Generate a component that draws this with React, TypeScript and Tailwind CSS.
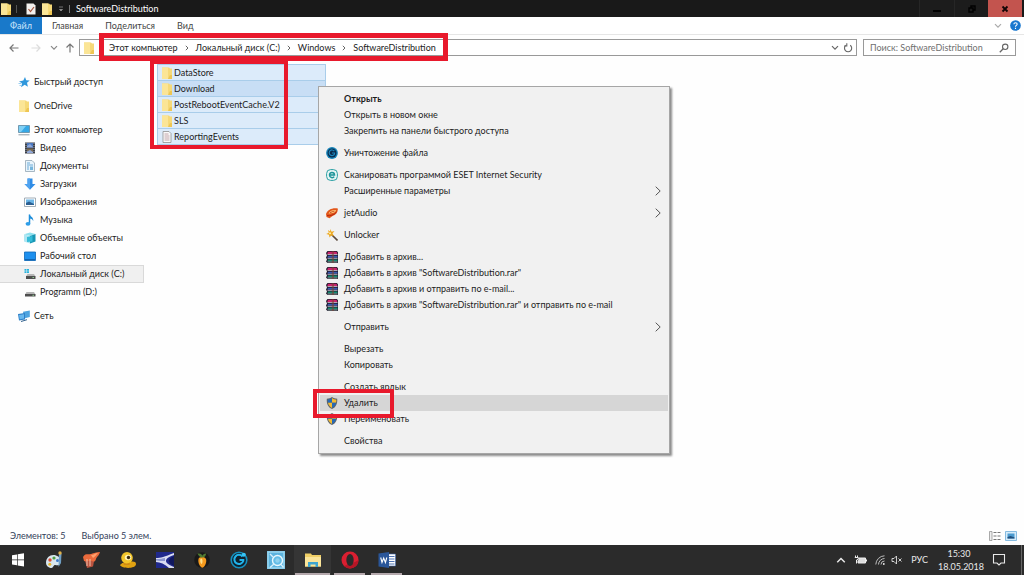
import React from "react";

type IconProps = { className?: string };

const FolderIcon = ({ className = "h-3 w-3" }: IconProps) => (
  <svg viewBox="0 0 12 12" className={className} aria-hidden="true">
    <path d="M1 .5h7l1 1h2V12H1z" fill="#f6d978" />
    <path d="M1 .5h6V12H1z" fill="#fbe596" />
    <path d="M9 8h2v4H7z" fill="#eec653" />
  </svg>
);

const FileIcon = () => (
  <svg viewBox="0 0 12 12" className="h-3 w-3" aria-hidden="true">
    <path d="M2 .5h6l2 2v9H2z" fill="#fafafa" stroke="#8f8f8f" strokeWidth=".8" />
    <path d="M3.500 3h4M3.500 5h5M3.500 7h5M3.500 9h5" stroke="#b48f96" strokeWidth=".8" />
  </svg>
);

const StarIcon = () => (
  <svg viewBox="0 0 12 12" className="h-3 w-3" aria-hidden="true">
    <path d="M7 1l1.200 3.200 3.500.2-2.700 2.300.9 4.100-3.200-2-3.700 2.400 1.200-3.900L1 5.500l4.300-1z" fill="#2f97dc" />
    <path d="M.5 7.500h3M1.500 9.500h2" stroke="#7cc0ee" strokeWidth=".8" />
  </svg>
);

const ComputerIcon = () => (
  <svg viewBox="0 0 12 12" className="h-3 w-3" aria-hidden="true">
    <path d="M.5 1.500h11v7H.5z" fill="#35a8e6" stroke="#5c7f96" strokeWidth=".7" />
    <path d="M1 2h7L3 8H1z" fill="#7fd0f5" />
    <path d="M.5 10.800h11" stroke="#8a9aa5" strokeWidth="1" />
  </svg>
);

const VideoIcon = () => (
  <svg viewBox="0 0 12 12" className="h-3 w-3" aria-hidden="true">
    <path d="M1 .5h10v11H1z" fill="#3a3f4a" />
    <path d="M3 1h6v4.500H3z" fill="#4a78c0" />
    <path d="M3 6.500h6V11H3z" fill="#7a6a50" />
    <path d="M3 4l3-2 3 3v.5H3zM3 9.500l3-1.500 3 2v1H3z" fill="#90a8d8" />
    <path d="M2 1v10M10 1v10" stroke="#d0d0d0" strokeWidth=".7" strokeDasharray="1 1" />
  </svg>
);

const DocumentIcon = () => (
  <svg viewBox="0 0 12 12" className="h-3 w-3" aria-hidden="true">
    <path d="M1.500.5h6.500l2.500 2.500v8.500h-9z" fill="#e9f4fb" stroke="#93a6b4" strokeWidth=".8" />
    <path d="M3 3h3M3 5h6M3 7h2M3 9h2" stroke="#4b9bd0" strokeWidth=".8" />
    <path d="M6 6.500h3V10H6z" fill="#77b6dd" />
  </svg>
);

const DownloadIcon = () => (
  <svg viewBox="0 0 12 12" className="h-3 w-3" aria-hidden="true">
    <path d="M3.500 .5h5V6h3L6 11.800.5 6h3z" fill="#2f8ce6" />
    <path d="M3.500 .5H6v11L.5 6h3z" fill="#4fa3f0" />
  </svg>
);

const PictureIcon = () => (
  <svg viewBox="0 0 12 12" className="h-3 w-3" aria-hidden="true">
    <path d="M.5 2h11v8.500H.5z" fill="#fff" stroke="#8c9aa6" strokeWidth=".8" />
    <path d="M2 3.500h8v5.500H2z" fill="#6bb5e6" />
    <path d="M2 7l3-1.500L10 8v1H2z" fill="#2c5f92" />
  </svg>
);

const MusicIcon = () => (
  <svg viewBox="0 0 12 12" className="h-3 w-3" aria-hidden="true">
    <path d="M5.500.5v9" stroke="#1f8fdb" strokeWidth="1.500" />
    <path d="M5.500.3c.5 2.200 4.500 3 3.700 7C8.700 5.500 7.500 4.500 5.500 4.500z" fill="#1f8fdb" />
    <ellipse cx="4" cy="9.800" rx="2.400" ry="1.900" fill="#2f9ee8" />
  </svg>
);

const CubeIcon = () => (
  <svg viewBox="0 0 12 12" className="h-3 w-3" aria-hidden="true">
    <path d="M0 2.200L6 .5l5.500 1.500L6 4z" fill="#8fe0ee" />
    <path d="M0 2.200L6 4v7.500L0 9.500z" fill="#aee6f2" />
    <path d="M6 4l5.500-2v7.500L6 11.500z" fill="#1796b4" />
    <path d="M3 5l5.500-1v5.500L3 10z" fill="#35bcd8" />
  </svg>
);

const DesktopIcon = () => (
  <svg viewBox="0 0 12 12" className="h-3 w-3" aria-hidden="true">
    <path d="M.5 2h11v8.500H.5z" fill="#1e90ee" stroke="#0d67b8" strokeWidth=".8" />
    <path d="M1 9.700h10" stroke="#0b4f92" strokeWidth=".8" />
  </svg>
);

const DriveIcon = () => (
  <svg viewBox="0 0 12 12" className="h-3 w-3" aria-hidden="true">
    <path d="M2.500 6h7.500l1.500 2.500H1z" fill="#b5b5b5" />
    <path d="M1 8h10.500v2.500H1z" fill="#4f4f4f" />
    <path d="M8.500 9.300h1.500" stroke="#9be89b" strokeWidth=".8" />
  </svg>
);

const SystemDriveIcon = () => (
  <svg viewBox="0 0 12 12" className="h-3 w-3" aria-hidden="true">
    <path d="M.5 1h2v1.800h-2zM3 1h2v1.800H3zM.5 3.300h2v1.800h-2zM3 3.300h2v1.800H3z" fill="#29b3dc" />
    <path d="M3.500 6h6.500l1.500 2.500H2z" fill="#b5b5b5" />
    <path d="M2 8h9.500v3H2z" fill="#4f4f4f" />
    <path d="M8.500 9.500h1.500" stroke="#9be89b" strokeWidth=".8" />
  </svg>
);

const NetworkIcon = () => (
  <svg viewBox="0 0 12 12" className="h-3 w-3" aria-hidden="true">
    <path d="M5 1.800L11.800.5v6.500L6 8.500z" fill="#4da3df" />
    <path d="M0 4l7-1v6.500L1 10.500z" fill="#2f80c8" />
    <path d="M1 5l5-.8v4.200L1.700 9.200z" fill="#67b7ee" />
    <path d="M3 11.500l6-1.800" stroke="#30608c" />
  </svg>
);

const ShredIcon = () => (
  <svg viewBox="0 0 12 12" className="h-3 w-3" aria-hidden="true">
    <circle cx="6" cy="6" r="5.900" fill="#1683b8" />
    <circle cx="6" cy="6" r="4.500" fill="#08294a" />
    <path d="M8.300 4.200A2.800 2.800 0 1 0 8.500 7V6H6" fill="none" stroke="#1b86bd" strokeWidth="1.200" />
  </svg>
);

const EsetIcon = () => (
  <svg viewBox="0 0 12 12" className="h-3 w-3" aria-hidden="true">
    <rect x=".6" y=".6" width="10.800" height="10.800" rx="4" fill="#e6f5f5" stroke="#2a9fa3" strokeWidth="1" />
    <path d="M3.500 6h5C8.400 2.800 3.500 2.700 3.500 6c0 3.100 3.600 3.200 4.700 1.600" fill="none" stroke="#1d9499" strokeWidth="1.500" />
  </svg>
);

const JetAudioIcon = () => (
  <svg viewBox="0 0 12 12" className="h-3 w-3" aria-hidden="true">
    <path d="M0 7C1.500 2.500 7 .3 11.800 1.500 12.200 5 10 8 6.500 9L3.500 11.300.5 10z" fill="#e2571b" />
    <path d="M2.500 6.500C4 3.800 7 2.800 10 3.200 9.500 5.800 6 6.300 2.500 6.500z" fill="#ffc878" />
    <path d="M4 5.800c1.500-1 3-1.500 4.500-1.700" stroke="#c43a12" strokeWidth=".8" fill="none" />
    <path d="M1 8.500c3 .8 7-.5 9.500-3.500" fill="none" stroke="#b5280f" strokeWidth="1" />
  </svg>
);

const WandIcon = () => (
  <svg viewBox="0 0 12 12" className="h-3 w-3" aria-hidden="true">
    <path d="M5 5l6.500 6.500" stroke="#5b4a3c" strokeWidth="1.600" />
    <path d="M4.500 0l1 2.700 3-.7-2 2.500 1.500 2.500-2.800-.6L3.500 8.500 3 5.800.2 5 2.800 3.700 2 1l2 1.500z" fill="#eda822" />
    <circle cx="4" cy="4.300" r="1" fill="#fff1a8" />
  </svg>
);

const RarIcon = () => (
  <svg viewBox="0 0 12 12" className="h-3 w-3" aria-hidden="true">
    <path d="M1.500 0h9.500l1 1.500V12H1.500L0 10.500 1 8.500 0 6.500l1-2L0 2z" fill="#201a2c" />
    <path d="M2 .8h8.500L11.500 3H1.200z" fill="#c9246c" />
    <path d="M1.500 3.500h10" stroke="#f3e7ef" strokeWidth=".7" />
    <path d="M2 4.800h9.500v1.700H1.500z" fill="#3559b4" />
    <path d="M1.500 7.300h10" stroke="#eef" strokeWidth=".7" />
    <path d="M2 8.600h9.500v1.700H1.500z" fill="#138a70" />
    <path d="M1.500 11h10" stroke="#dfe" strokeWidth=".6" />
    <path d="M5.800 0h2.200v12H5.800z" fill="#7b3f33" fillOpacity=".55" />
  </svg>
);

const ShieldIcon = () => (
  <svg viewBox="0 0 12 12" className="h-3 w-3" aria-hidden="true">
    <path d="M6 0C4.500 1.200 2.700 1.700.8 1.700c-.4 5 1.200 8.500 5.200 10.300 4-1.800 5.600-5.300 5.200-10.300C9.300 1.700 7.500 1.200 6 0z" fill="#5f6468" />
    <path d="M6 1C4.700 2 3.200 2.500 1.700 2.600c0 1.200 0 2.200.3 3.200h4z" fill="#2469b8" />
    <path d="M6 1c1.300 1 2.800 1.500 4.300 1.600 0 1.200 0 2.200-.3 3.200H6z" fill="#f2bb33" />
    <path d="M2 5.800h4V11C3.800 9.900 2.500 8.200 2 5.800z" fill="#f2bb33" />
    <path d="M10 5.800H6V11c2.200-1.100 3.500-2.800 4-5.200z" fill="#2469b8" />
  </svg>
);

const ChevronRight = () => (
  <svg viewBox="0 0 6 10" className="h-2.5 w-1.5" aria-hidden="true">
    <path d="M.7.7L5.200 5 .7 9.300" fill="none" stroke="#555" strokeWidth="1" />
  </svg>
);

const ChevronDown = ({ className = "h-1.5 w-2" }: IconProps) => (
  <svg viewBox="0 0 8 6" className={className} aria-hidden="true">
    <path d="M1 1.200l3 3 3-3" fill="none" stroke="currentColor" strokeWidth="1.200" />
  </svg>
);

const ArrowIcon = ({ className }: IconProps) => (
  <svg viewBox="0 0 12 12" className={className} aria-hidden="true">
    <path d="M10.500 6H2M5.500 2.500L2 6l3.500 3.500" fill="none" stroke="currentColor" strokeWidth="1.200" />
  </svg>
);

type MenuEntry = {
  label: string;
  icon?: React.ReactNode;
  bold?: boolean;
  submenu?: boolean;
  active?: boolean;
};

const menuGroups: MenuEntry[][] = [
  [
    { label: "Открыть", bold: true },
    { label: "Открыть в новом окне" },
    { label: "Закрепить на панели быстрого доступа" },
  ],
  [{ label: "Уничтожение файла", icon: <ShredIcon /> }],
  [
    { label: "Сканировать программой ESET Internet Security", icon: <EsetIcon /> },
    { label: "Расширенные параметры", submenu: true },
  ],
  [{ label: "jetAudio", icon: <JetAudioIcon />, submenu: true }],
  [{ label: "Unlocker", icon: <WandIcon /> }],
  [
    { label: "Добавить в архив...", icon: <RarIcon /> },
    { label: 'Добавить в архив "SoftwareDistribution.rar"', icon: <RarIcon /> },
    { label: "Добавить в архив и отправить по e-mail...", icon: <RarIcon /> },
    { label: 'Добавить в архив "SoftwareDistribution.rar" и отправить по e-mail', icon: <RarIcon /> },
  ],
  [{ label: "Отправить", submenu: true }],
  [{ label: "Вырезать" }, { label: "Копировать" }],
  [
    { label: "Создать ярлык" },
    { label: "Удалить", icon: <ShieldIcon />, active: true },
    { label: "Переименовать", icon: <ShieldIcon /> },
  ],
  [{ label: "Свойства" }],
];

type NavEntry = { label: string; icon: React.ReactNode; child?: boolean; active?: boolean };

const navGroups: NavEntry[][] = [
  [{ label: "Быстрый доступ", icon: <StarIcon /> }],
  [{ label: "OneDrive", icon: <FolderIcon /> }],
  [
    { label: "Этот компьютер", icon: <ComputerIcon /> },
    { label: "Видео", icon: <VideoIcon />, child: true },
    { label: "Документы", icon: <DocumentIcon />, child: true },
    { label: "Загрузки", icon: <DownloadIcon />, child: true },
    { label: "Изображения", icon: <PictureIcon />, child: true },
    { label: "Музыка", icon: <MusicIcon />, child: true },
    { label: "Объемные объекты", icon: <CubeIcon />, child: true },
    { label: "Рабочий стол", icon: <DesktopIcon />, child: true },
    { label: "Локальный диск (C:)", icon: <SystemDriveIcon />, child: true, active: true },
    { label: "Programm (D:)", icon: <DriveIcon />, child: true },
  ],
  [{ label: "Сеть", icon: <NetworkIcon /> }],
];

const files = [
  { name: "DataStore" },
  { name: "Download", focused: true },
  { name: "PostRebootEventCache.V2" },
  { name: "SLS" },
  { name: "ReportingEvents", text: true },
];

const crumbs = ["Этот компьютер", "Локальный диск (C:)", "Windows", "SoftwareDistribution"];

function TitleBar() {
  return (
    <header className="flex h-[17px] items-stretch bg-[#191919] text-white">
      <div className="flex items-center">
        <FolderIcon className="h-3 w-3" />
        <span className="ml-1 h-2 w-px bg-[#555]" />
        <button type="button" aria-label="Свойства папки" className="ml-2">
          <svg viewBox="0 0 12 12" className="h-3 w-3" aria-hidden="true">
            <path d="M1.500.5h7l2 2v9h-9z" fill="#f4f1ee" />
            <path d="M3.500 6l2 2.500L9 4" fill="none" stroke="#a5543e" strokeWidth="1.200" />
          </svg>
        </button>
        <button type="button" aria-label="Новая папка" className="ml-1">
          <FolderIcon className="h-3 w-3" />
        </button>
        <button type="button" aria-label="Настройка панели" className="ml-1">
          <svg viewBox="0 0 8 8" className="h-2 w-2" aria-hidden="true">
            <path d="M2 2h4M2.500 4.500h3L4 6z" fill="#999" stroke="#999" strokeWidth=".7" />
          </svg>
        </button>
        <span className="ml-1 h-2 w-px bg-[#777]" />
        <h1 className="ml-1.5 text-[9px]">SoftwareDistribution</h1>
      </div>
      <div className="ml-auto flex pr-0.5">
        <button type="button" aria-label="Свернуть" className="flex w-[35px] items-center justify-center border-l border-[#262626] bg-[#1c1c1c]">
          <span className="mt-1 h-0.5 w-2 bg-black" />
        </button>
        <button type="button" aria-label="Развернуть" className="flex w-[34px] items-center justify-center border-l border-[#262626] bg-[#1c1c1c]">
          <svg viewBox="0 0 8 8" className="h-2 w-2" aria-hidden="true">
            <path d="M1 3h4v4H1zM3 2.500V1h4v4H5.500" fill="none" stroke="#000" strokeWidth="1.400" />
          </svg>
        </button>
        <button type="button" aria-label="Закрыть" className="flex w-[34px] items-center justify-center bg-[#c3544e]">
          <svg viewBox="0 0 8 8" className="h-2 w-2" aria-hidden="true">
            <path d="M1.500 1.500l5 5M6.500 1.500l-5 5" stroke="#120505" strokeWidth="1.800" />
          </svg>
        </button>
      </div>
    </header>
  );
}

function RibbonTabs() {
  return (
    <nav className="flex h-[18px] items-stretch border-b border-[#e6e6e6] bg-white text-[#444]" aria-label="Лента">
      <button type="button" className="w-[42px] bg-[#1979ca] text-[#cfe6fa]">Файл</button>
      <button type="button" className="ml-2.5">Главная</button>
      <button type="button" className="ml-[22px]">Поделиться</button>
      <button type="button" className="ml-[22px]">Вид</button>
      <div className="ml-auto flex items-center gap-2 pr-[3px]">
        <button type="button" aria-label="Развернуть ленту" className="text-[#aaa]"><ChevronDown /></button>
        <button type="button" aria-label="Справка">
          <svg viewBox="0 0 12 12" className="h-[11px] w-[11px]" aria-hidden="true">
            <circle cx="6" cy="6" r="5.800" fill="#1a78cf" />
            <path d="M4.200 4.600C4.300 2.400 7.800 2.400 7.800 4.600 7.800 5.900 6 5.900 6 7.300M6 8.400v1.300" fill="none" stroke="#fff" strokeWidth="1.200" />
          </svg>
        </button>
      </div>
    </nav>
  );
}

function AddressRow() {
  return (
    <div className="flex items-center pt-1 pr-2 pb-px pl-2 text-[#222]">
      <button type="button" aria-label="Назад" className="text-[#777]"><ArrowIcon className="h-3 w-3" /></button>
      <button type="button" aria-label="Вперёд" className="ml-2.5 text-[#dcdcdc]"><ArrowIcon className="h-3 w-3 rotate-180" /></button>
      <button type="button" aria-label="Журнал" className="ml-2 text-[#888]"><ChevronDown /></button>
      <button type="button" aria-label="Вверх" className="ml-1.5 text-[#777]"><ArrowIcon className="h-3 w-3 rotate-90" /></button>
      <div className="ml-[3px] flex h-[17px] flex-1 items-center border border-[#999] bg-white pr-[3px] pl-[3px]">
        <FolderIcon className="h-3 w-3" />
        <ol className="ml-3.5 flex items-center">
          {crumbs.map((crumb) => (
            <li key={crumb} className="flex items-center">
              <a href="#" className="whitespace-nowrap">{crumb}</a>
              <svg viewBox="0 0 4 6" className="mx-[7px] h-1.5 w-1" aria-hidden="true">
                <path d="M.8.8L3 3 .8 5.200" fill="none" stroke="#555" strokeWidth=".9" />
              </svg>
            </li>
          ))}
        </ol>
        <button type="button" aria-label="Предыдущие адреса" className="ml-auto text-[#666]"><ChevronDown /></button>
        <button type="button" aria-label="Обновить" className="ml-1">
          <svg viewBox="0 0 10 10" className="h-2.5 w-2.5" aria-hidden="true">
            <path d="M3 2.200A3.600 3.600 0 1 0 7.200 2.200M3.800.3v2.700H1" fill="none" stroke="#666" strokeWidth="1.100" />
          </svg>
        </button>
      </div>
      <div className="ml-1.5 flex h-[17px] w-[153px] items-center border border-[#999] bg-white pr-1.5 pl-1.5">
        <input
          type="search"
          aria-label="Поиск"
          placeholder="Поиск: SoftwareDistribution"
          className="min-w-0 flex-1 bg-transparent text-[9px] outline-none placeholder:text-[#6f6f6f]"
        />
        <svg viewBox="0 0 10 10" className="h-2.5 w-2.5" aria-hidden="true">
          <circle cx="6.200" cy="3.800" r="2.700" fill="none" stroke="#666" strokeWidth="1.100" />
          <path d="M4.200 5.800L.8 9.200" stroke="#666" strokeWidth="1.300" />
        </svg>
      </div>
    </div>
  );
}

function Sidebar() {
  return (
    <nav className="flex w-36 shrink-0 flex-col gap-1.5 pt-4" aria-label="Папки">
      {navGroups.map((group) => (
        <ul key={group[0].label}>
          {group.map((item) => (
            <li key={item.label}>
              <a
                href="#"
                className={`flex h-[18px] items-center gap-1 whitespace-nowrap ${item.child ? "pl-6" : "pl-[18px]"} ${
                  item.active ? "border border-l-0 border-[#d9d9d9] bg-[#f0f0f0]" : ""
                }`}
              >
                {item.icon}
                {item.label}
              </a>
            </li>
          ))}
        </ul>
      ))}
    </nav>
  );
}

function FileList() {
  return (
    <ul className="ml-[13px] w-[169px] pt-[7px]" aria-label="Файлы">
      {files.map((file) => (
        <li key={file.name}>
          <button
            type="button"
            className={`flex h-4 w-full items-center gap-px border border-b-0 border-[#a9cdea] pl-[3px] ${
              file.focused ? "bg-[#c8def5]" : "bg-[#dcebfa]"
            }`}
          >
            {file.text ? <FileIcon /> : <FolderIcon />}
            {file.name}
          </button>
        </li>
      ))}
      <li className="h-px bg-[#a9cdea]" aria-hidden="true" />
    </ul>
  );
}

function ContextMenu() {
  return (
    <div
      role="menu"
      className="absolute top-[86px] left-[318px] flex w-[352px] flex-col gap-1.5 border border-[#a6a6a6] bg-[#f1f1f1] px-px py-1 shadow-[2px_2px_2px_rgba(0,0,0,0.45)]"
    >
      {menuGroups.map((group) => (
        <div key={group[0].label} role="group">
          {group.map((item) => (
            <button
              key={item.label}
              type="button"
              role="menuitem"
              className={`flex h-4 w-full items-center pr-[7px] pl-1.5 text-left whitespace-nowrap ${item.active ? "bg-[#d6d6d6]" : ""} ${
                item.bold ? "font-bold" : ""
              }`}
            >
              <span className="mr-1.5 w-3">{item.icon}</span>
              <span className="flex-1">{item.label}</span>
              {item.submenu && <ChevronRight />}
            </button>
          ))}
        </div>
      ))}
    </div>
  );
}

const apps: { name: string; running?: boolean; active?: boolean; icon: React.ReactNode }[] = [
  {
    name: "Пуск",
    icon: (
      <path d="M3 4.200l5-.8v5.100H3zM8.700 3.300L15 2.300v6.200H8.700zM3 9.200h5v5.100l-5-.8zM8.700 9.200H15v6.200l-6.300-1z" fill="#fff" />
    ),
  },
  {
    name: "Paint",
    icon: (
      <>
        <path d="M1 12C1 6 6 3 11 4.500c5 1.500 6 6 3.500 9-2 2-4-.5-5.500 1s-1 3-3.500 2.500S1 14.500 1 12z" fill="#d8e6ee" />
        <circle cx="5" cy="9" r="1.700" fill="#d94c35" />
        <circle cx="9" cy="7" r="1.600" fill="#4f9d45" />
        <circle cx="12.500" cy="9.500" r="1.500" fill="#3a78c9" />
        <circle cx="4.800" cy="13.300" r="1.500" fill="#e8b52d" />
        <path d="M14 2l2.500.5L16 12l-2.500 4z" fill="#6f9fc4" />
        <circle cx="15" cy="2" r="1.700" fill="#e0b04a" />
      </>
    ),
  },
  {
    name: "Nero",
    icon: (
      <>
        <path d="M2 6l11-1-2 10.500L5 17z" fill="#b9533f" />
        <path d="M1 6c2-4 5-2 8-3s5-2 9-2c-1 4-3 4-4 7s-2 3-4 2-6 1-8 0z" fill="#ea6a3c" />
        <path d="M5 8v7M8 8v7" stroke="#f2c2ad" strokeWidth="1" />
        <path d="M9 4c3 0 4-2 7-2-2 2-3 4-5 5z" fill="#ffa06c" />
      </>
    ),
  },
  {
    name: "Download Master",
    icon: (
      <>
        <path d="M1 14c2-3 6-3 8-2 3-2 8-2 8 1 0 5-14 5-16 1z" fill="#e0a211" />
        <circle cx="8" cy="6.800" r="5.800" fill="#f3c62b" />
        <ellipse cx="9" cy="6.500" rx="3.200" ry="2.700" fill="#fff3b5" />
        <circle cx="9.500" cy="6.500" r="1.700" fill="#3b2b10" />
        <path d="M4 11.500c2 1.500 5 1.500 7 0l-.5 2.500H5z" fill="#cf8a14" />
      </>
    ),
  },
  {
    name: "Media Player",
    icon: (
      <>
        <path d="M0 1h18v16H0z" fill="#20298c" />
        <path d="M0 7c5 0 8-1 18-5v2c-6 2-8 4-8 6s3 4 8 6v1H13C9 13 4 11 0 11z" fill="#d9dcf2" />
        <path d="M0 8c4 0 7-.5 9-1v3c-3 0-6 0-9-.5z" fill="#8d97cf" />
        <path d="M18 5c-7 3-7 7 0 10z" fill="#11185e" />
      </>
    ),
  },
  {
    name: "FL Studio",
    icon: (
      <>
        <circle cx="9" cy="9" r="7.800" fill="#191919" />
        <path d="M5.500 8c0-2.500 6.500-3 7.500 0s-1 7.500-3 8.500-5.500-4-4.500-8.500z" fill="#f59a1e" />
        <path d="M7.500 8c1-1 2 0 2 2s-.5 3-1 3-2-3-1-5z" fill="#ffe08a" />
        <path d="M8 6.500C6 5 5 4 4.500 2.500c2 0 4 0 5 2.200C10 3.500 11 2.500 13 2.500c0 2-1 3.500-3 4z" fill="#4f7a32" />
      </>
    ),
  },
  {
    name: "Cleaner",
    icon: (
      <>
        <circle cx="9" cy="9" r="7.800" fill="#10222e" stroke="#1590bf" strokeWidth="1.600" />
        <path d="M12.500 5.500A4.600 4.600 0 1 0 13.300 10V9H9.500" fill="none" stroke="#22b5ec" strokeWidth="2" />
        <circle cx="13.800" cy="3.800" r="2" fill="#38c4f4" />
      </>
    ),
  },
  {
    name: "Поиск",
    icon: (
      <>
        <path d="M0 0h18v18H0z" fill="#5cb3de" />
        <path d="M1 1h16v16H1z" fill="none" stroke="#9ad6f0" strokeWidth="1.500" />
        <circle cx="10.500" cy="9.500" r="5" fill="#64bce6" stroke="#e8f7fd" strokeWidth="1.400" />
        <circle cx="10.500" cy="9.500" r="2.200" fill="#8fd2ef" />
        <path d="M7 13L3 16.500M14 13.500l2.500 3M3 3l3 3" stroke="#d5eefa" strokeWidth="1.400" />
      </>
    ),
  },
  {
    name: "Проводник",
    running: true,
    active: true,
    icon: (
      <>
        <path d="M1 2.500h6l1 1.500h9v11.500H1z" fill="#f0cf66" />
        <path d="M1 6h16v9.500H1z" fill="#fbe59a" />
        <path d="M4 16v-5h10v5h-2.500v-2.500h-5V16z" fill="#3fa5cf" />
      </>
    ),
  },
  {
    name: "Opera",
    running: true,
    icon: (
      <>
        <ellipse cx="9" cy="9" rx="8.500" ry="8.500" fill="#db1f31" />
        <path d="M3 15A8.500 8.500 0 0 0 17.500 9L14 11z" fill="#b51626" />
        <ellipse cx="9" cy="9" rx="3.700" ry="6" fill="#2b2b2b" />
      </>
    ),
  },
  {
    name: "Word",
    running: true,
    icon: (
      <>
        <path d="M9 3h8.500v12H9z" fill="#fff" stroke="#3e66ab" strokeWidth=".6" />
        <path d="M11 5.500h5.500M11 8h5.500M11 10.500h5.500M11 13h5.500" stroke="#4f74b5" strokeWidth="1" />
        <path d="M.5 2.500L11 1v16L.5 15.500z" fill="#2a5699" />
        <path d="M2.700 6.500L4 11.500 5.700 7 7.400 11.500 8.800 6.500" fill="none" stroke="#fff" strokeWidth="1.100" />
      </>
    ),
  },
];

function Taskbar() {
  return (
    <footer className="flex h-[30px] items-stretch bg-[#2b2b2b] text-[#e8e8e8]">
      {apps.map((app) => (
        <button
          key={app.name}
          type="button"
          aria-label={app.name}
          className={`flex w-[37px] items-stretch justify-center first:w-[35px] ${app.active ? "bg-[#353535] px-px" : "px-[3px]"}`}
        >
          <span className={`flex flex-1 items-center justify-center border-y-2 border-t-transparent ${app.running ? "border-b-[#b5a9ad]" : "border-b-transparent"}`}>
            <svg viewBox="0 0 18 18" className="h-[18px] w-[18px]" aria-hidden="true">{app.icon}</svg>
          </span>
        </button>
      ))}
      <div className="ml-auto flex items-center">
        <button type="button" aria-label="Скрытые значки">
          <ChevronDown className="h-2 w-2.5 rotate-180" />
        </button>
        <svg viewBox="0 0 13 10" className="ml-2 h-2.5 w-[13px]" aria-label="Батарея">
          <path d="M5 3h6.500v5H4V5.500" fill="#ddd" stroke="#eee" strokeWidth="1" />
          <path d="M12.500 4.500v2M1.500.5V2M3.500.5V2M.8 2.500h3.500V4L2.500 5v3.500" fill="none" stroke="#eee" strokeWidth="1" />
        </svg>
        <svg viewBox="0 0 10 10" className="ml-2 h-2.5 w-2.5" aria-label="Сеть">
          <path d="M.8 9.500A9 9 0 0 1 9.500.8M3.500 9.500a6.200 6.200 0 0 1 6-6M6 9.500a3.600 3.600 0 0 1 3.500-3.500" fill="none" stroke="#bdbdbd" strokeWidth="1" />
          <circle cx="8.800" cy="9" r=".9" fill="#eee" />
        </svg>
        <svg viewBox="0 0 12 10" className="ml-1.5 h-2.5 w-3" aria-label="Звук">
          <path d="M1 3.500h2L5.500 1v8L3 6.500H1z" fill="none" stroke="#e0e0e0" strokeWidth=".9" />
          <path d="M7.500 3.500l3 3M10.500 3.500l-3 3" stroke="#e0e0e0" strokeWidth=".9" />
        </svg>
        <button type="button" className="ml-2 text-[9px]">РУС</button>
        <div className="ml-2.5 w-[42px] text-center text-[9px] leading-[13px] whitespace-nowrap">
          <div>15:30</div>
          <div>18.05.2018</div>
        </div>
        <button type="button" aria-label="Уведомления" className="ml-3">
          <svg viewBox="0 0 14 14" className="h-3.5 w-3.5" aria-hidden="true">
            <path d="M1.500 1.500h11v8.500H9l-2 2-2-2H1.500z" fill="none" stroke="#e8e8e8" strokeWidth="1.100" />
          </svg>
        </button>
        <span className="mr-0.5 ml-[15px] h-[30px] w-px bg-[#666]" />
      </div>
    </footer>
  );
}

export default function App() {
  return (
    <div className="relative flex min-h-screen flex-col bg-[#fefefe] font-['Lato','Noto_Sans',sans-serif] text-[9px] leading-3 text-[#1c1c1c]">
      <TitleBar />
      <RibbonTabs />
      <AddressRow />
      <main className="flex flex-1">
        <Sidebar />
        <FileList />
      </main>
      <div className="flex h-[18px] items-center gap-4 pr-[7px] pl-2.5 text-[#33415a]">
        <span>Элементов: 5</span>
        <span>Выбрано 5 элем.</span>
        <div className="ml-auto flex items-center gap-1">
          <button type="button" aria-label="Таблица">
            <svg viewBox="0 0 12 10" className="h-2.5 w-3" aria-hidden="true">
              <path d="M.5.5h2.500v9H.5z" fill="#eee" stroke="#888" strokeWidth=".7" />
              <path d="M4.500 1.500h3M8.500 1.500h3M4.500 5h3M8.500 5h3M4.500 8.500h3M8.500 8.500h3" stroke="#777" strokeWidth="1" />
            </svg>
          </button>
          <button type="button" aria-label="Крупные значки">
            <svg viewBox="0 0 12 10" className="h-2.5 w-3" aria-hidden="true">
              <path d="M.5.5h11v9H.5z" fill="#d6ecfa" stroke="#7ab4dc" strokeWidth=".9" />
              <path d="M2.500 2.500h7v5h-7z" fill="#4b9bd0" />
              <path d="M2.500 6l3-1 4 1.500v1h-7z" fill="#214f7c" />
            </svg>
          </button>
        </div>
      </div>
      <Taskbar />
      <ContextMenu />
      <div className="pointer-events-none absolute top-[33px] left-[99px] h-7 w-[349px] border-[5px] border-[#e8192c]" />
      <div className="pointer-events-none absolute top-[60px] left-[150px] h-[89px] w-[138px] border-4 border-[#e8192c]" />
      <div className="pointer-events-none absolute top-[389px] left-[313px] h-[29px] w-[81px] border-4 border-[#e8192c]" />
    </div>
  );
}
